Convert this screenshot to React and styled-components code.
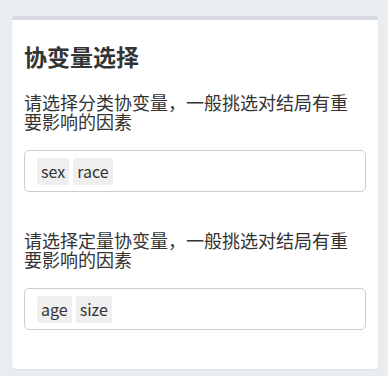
import React from "react";
import styled, { createGlobalStyle } from "styled-components";

const Global = createGlobalStyle`
  html, body { margin: 0; padding: 0; background: #e9ecf1; }
  body { font-family: "Noto Sans CJK SC", "Noto Sans", sans-serif; color: #333; }
`;

const Page = styled.div`
  padding: 16px 10px 7px 12px;
`;

const Card = styled.section`
  background: #fff;
  border-top: 4px solid #d6d9df;
  border-radius: 4px;
  box-shadow: 0 1px 2px rgba(0, 0, 0, 0.06);
  padding: 20px 12px 39px;
`;

const Title = styled.h3`
  margin: 0 0 21px;
  font-size: 23px;
  line-height: 32px;
  font-weight: 700;
  color: #333;
`;

const Field = styled.div`
  & + & { margin-top: 39px; }
`;

const Label = styled.p`
  margin: 0 0 19px;
  font-size: 18px;
  line-height: 19px;
  padding-right: 4px;
  color: #333;
`;

const TagBox = styled.div`
  display: flex;
  align-items: center;
  gap: 4px;
  height: 42px;
  box-sizing: border-box;
  border: 1px solid #cccccc;
  border-radius: 5px;
  padding: 0 12px;
`;

const Tag = styled.span`
  display: inline-flex;
  align-items: center;
  height: 27px;
  padding: 0 4px;
  background: #efefef;
  border-radius: 3px;
  font-size: 16px;
  color: #333;
`;

const fields = [
  { label: "请选择分类协变量，一般挑选对结局有重要影响的因素", tags: ["sex", "race"] },
  { label: "请选择定量协变量，一般挑选对结局有重要影响的因素", tags: ["age", "size"] },
];

export default function App() {
  return (
    <>
      <Global />
      <Page>
        <Card>
          <Title>协变量选择</Title>
          {fields.map((f, i) => (
            <Field key={i}>
              <Label>{f.label}</Label>
              <TagBox>
                {f.tags.map((t) => (
                  <Tag key={t}>{t}</Tag>
                ))}
              </TagBox>
            </Field>
          ))}
        </Card>
      </Page>
    </>
  );
}
